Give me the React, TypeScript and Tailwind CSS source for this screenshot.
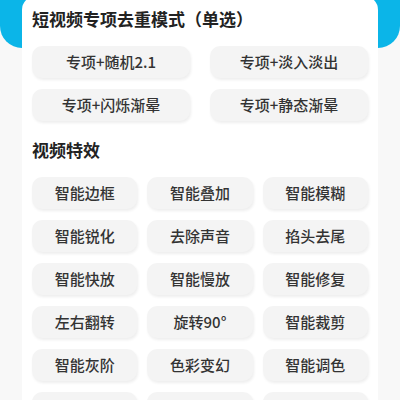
const modes = ['专项+随机2.1', '专项+淡入淡出', '专项+闪烁渐晕', '专项+静态渐晕'];

const effects = [
  '智能边框', '智能叠加', '智能模糊',
  '智能锐化', '去除声音', '掐头去尾',
  '智能快放', '智能慢放', '智能修复',
  '左右翻转', '旋转90°', '智能裁剪',
  '智能灰阶', '色彩变幻', '智能调色',
  '智能镜像', '智能缩放', '智能抽帧',
];

const Chip = ({ label }: { label: string }) => (
  <button className="h-[32px] rounded-[10px] bg-[#f4f4f4] text-[15px] font-medium text-[#333] shadow-[1px_2px_3px_rgba(0,0,0,0.07)]">
    {label}
  </button>
);

export default function App() {
  return (
    <div
      className="relative w-[400px] h-[400px] overflow-hidden bg-[#f8f8f8]"
      style={{ fontFamily: '"Noto Sans CJK SC", "Noto Sans", sans-serif' }}
    >
      {/* cyan header behind the card */}
      <div className="absolute inset-x-0 top-0 h-[48px] rounded-b-[22px] bg-[#0bb5e8]" />

      <div className="relative mx-[22px] mt-[-4px] rounded-t-[14px] bg-white px-[10px] pt-[11px] pb-6">
        <h2 className="text-[17px] leading-[24px] font-bold text-[#222]">短视频专项去重模式（单选）</h2>
        <div className="mt-[15px] grid grid-cols-2 gap-x-[20px] gap-y-[11px]">
          {modes.map((m) => (
            <Chip key={m} label={m} />
          ))}
        </div>

        <h2 className="mt-[17px] text-[17px] leading-[24px] font-bold text-[#222]">视频特效</h2>
        <div className="mt-[15px] grid grid-cols-3 gap-x-[10px] gap-y-[11px]">
          {effects.map((e) => (
            <Chip key={e} label={e} />
          ))}
        </div>
      </div>
    </div>
  );
}
